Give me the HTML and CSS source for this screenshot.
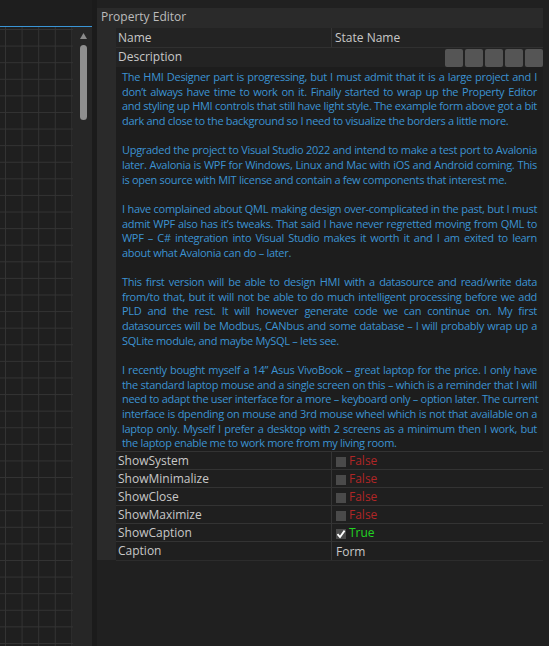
FILE: index.html
```html
<!DOCTYPE html>
<html>
<head>
<meta charset="utf-8">
<title>Property Editor</title>
<link rel="stylesheet" href="styles.css">
</head>
<body>
<div class="app">
  <div class="designer">
    <div class="designer-main">
      <div class="designer-top"></div>
      <div class="designer-body">
        <div class="canvas"></div>
        <div class="vscroll">
          <svg class="arrow" width="7" height="6" viewBox="0 0 7 6"><path d="M3.5 0 L7 6 L0 6 Z" fill="#8a8a8a"/></svg>
          <div class="thumb"></div>
        </div>
      </div>
    </div>
    <div class="strip"></div>
  </div>
  <div class="right">
    <div class="panel">
      <div class="panel-title">Property Editor</div>
      <div class="table">
        <div class="row head">
          <div class="key">Name</div>
          <div class="val">State Name</div>
        </div>
        <div class="row desc-head">
          <div class="key">Description</div>
          <div class="btns"><span class="btn"></span><span class="btn"></span><span class="btn"></span><span class="btn"></span><span class="btn"></span></div>
        </div>
        <div class="desc">
          <p>
            <span class="ln">The HMI Designer part is progressing, but I must admit that it is a large project and I</span>
            <span class="ln">don’t always have time to work on it. Finally started to wrap up the Property Editor</span>
            <span class="ln">and styling up HMI controls that still have light style. The example form above got a bit</span>
            <span class="ln last">dark and close to the background so I need to visualize the borders a little more.</span>
          </p>
          <p>
            <span class="ln">Upgraded the project to Visual Studio 2022 and intend to make a test port to Avalonia</span>
            <span class="ln">later. Avalonia is WPF for Windows, Linux and Mac with iOS and Android coming. This</span>
            <span class="ln last">is open source with MIT license and contain a few components that interest me.</span>
          </p>
          <p>
            <span class="ln">I have complained about QML making design over-complicated in the past, but I must</span>
            <span class="ln">admit WPF also has it’s tweaks. That said I have never regretted moving from QML to</span>
            <span class="ln">WPF – C# integration into Visual Studio makes it worth it and I am exited to learn</span>
            <span class="ln last">about what Avalonia can do – later.</span>
          </p>
          <p>
            <span class="ln">This first version will be able to design HMI with a datasource and read/write data</span>
            <span class="ln">from/to that, but it will not be able to do much intelligent processing before we add</span>
            <span class="ln">PLD and the rest. It will however generate code we can continue on. My first</span>
            <span class="ln">datasources will be Modbus, CANbus and some database – I will probably wrap up a</span>
            <span class="ln last">SQLite module, and maybe MySQL – lets see.</span>
          </p>
          <p>
            <span class="ln">I recently bought myself a 14” Asus VivoBook – great laptop for the price. I only have</span>
            <span class="ln">the standard laptop mouse and a single screen on this – which is a reminder that I will</span>
            <span class="ln">need to adapt the user interface for a more – keyboard only – option later. The current</span>
            <span class="ln">interface is dpending on mouse and 3rd mouse wheel which is not that available on a</span>
            <span class="ln">laptop only. Myself I prefer a desktop with 2 screens as a minimum then I work, but</span>
            <span class="ln last">the laptop enable me to work more from my living room.</span>
          </p>
        </div>
        <div class="row prop">
          <div class="key">ShowSystem</div>
          <div class="val"><span class="cb"></span><span class="false">False</span></div>
        </div>
        <div class="row prop">
          <div class="key">ShowMinimalize</div>
          <div class="val"><span class="cb"></span><span class="false">False</span></div>
        </div>
        <div class="row prop">
          <div class="key">ShowClose</div>
          <div class="val"><span class="cb"></span><span class="false">False</span></div>
        </div>
        <div class="row prop">
          <div class="key">ShowMaximize</div>
          <div class="val"><span class="cb"></span><span class="false">False</span></div>
        </div>
        <div class="row prop">
          <div class="key">ShowCaption</div>
          <div class="val"><span class="cb checked"><svg width="10" height="10" viewBox="0 0 10 10"><path d="M1.5 5.2 L4 8 L8.6 1.6" fill="none" stroke="#ffffff" stroke-width="1.8"/></svg></span><span class="true">True</span></div>
        </div>
        <div class="row prop lastrow">
          <div class="key">Caption</div>
          <div class="val">Form</div>
        </div>
      </div>
    </div>
  </div>
</div>
</body>
</html>
```

FILE: styles.css
```css
html, body {
  margin: 0;
  padding: 0;
}
body {
  background: #202020;
  font-family: "Open Sans", "Noto Sans", sans-serif;
  color: #c4c4c4;
  width: 549px;
  height: 646px;
  overflow: hidden;
}
.app {
  display: flex;
  height: 646px;
}
.designer {
  width: 97px;
  display: flex;
  flex-shrink: 0;
}
.designer-main {
  width: 92px;
  display: flex;
  flex-direction: column;
}
.designer-top {
  height: 26px;
  background: #1e1e1e;
  border-bottom: 1px solid #3a95d6;
}
.designer-body {
  flex: 1;
  display: flex;
}
.canvas {
  width: 73px;
  flex-shrink: 0;
  background-color: #1f1f1f;
  background-image:
    linear-gradient(to right, #333333 0, #333333 1px, rgba(0,0,0,0) 1px),
    linear-gradient(to bottom, #333333 0, #333333 1px, rgba(0,0,0,0) 1px);
  background-size: 16.6px 16.6px, 16.6px 16.6px;
  background-position: 5px 2px, 5px 2px;
  background-repeat: repeat, repeat;
}
.vscroll {
  width: 19px;
  flex-shrink: 0;
  background: #262626;
  display: flex;
  flex-direction: column;
  align-items: center;
  padding-top: 6px;
}
.arrow {
  display: block;
  margin-left: 1px;
}
.thumb {
  width: 7px;
  height: 75px;
  margin-top: 6px;
  margin-left: 1px;
  border-radius: 4px;
  background: #8f8f8f;
}
.strip {
  width: 5px;
  background: #1b1b1b;
}
.right {
  flex: 1;
  padding-top: 8px;
}
.panel {
  width: 446px;
  height: 552px;
  background: #2a2a2a;
}
.panel-title {
  height: 20px;
  line-height: 17px;
  padding-left: 4px;
  font-size: 12px;
  color: #bcbcbc;
}
.table {
  margin-left: 19px;
  background: #1f1f1f;
}
.row {
  display: flex;
  font-size: 12px;
  color: #c8c8c8;
}
.key {
  width: 213px;
  padding-left: 2px;
  flex-shrink: 0;
}
.val {
  flex: 1;
  padding-left: 4px;
  border-left: 1px solid #353535;
  display: flex;
  align-items: center;
}
.row.head {
  height: 19px;
  line-height: 19px;
  background: #232323;
}
.row.head .val {
  padding-left: 3px;
}
.row.desc-head {
  height: 19px;
  line-height: 18px;
  background: #232323;
  border-top: 1px solid #303030;
  justify-content: space-between;
}
.btns {
  display: flex;
  gap: 2px;
  padding-top: 1px;
}
.btn {
  width: 18px;
  height: 18px;
  border-radius: 2px;
  background: #555555;
}
.desc {
  background: #1d1d1d;
  padding: 3px 6px 0 6px;
  height: 381px;
  color: #3c93d2;
  font-size: 11px;
  letter-spacing: -0.3px;
  line-height: 14.65px;
}
.desc p {
  margin: 0 0 14.65px 0;
}
.ln {
  display: block;
  white-space: nowrap;
  text-align: justify;
  text-align-last: justify;
}
.ln.last {
  text-align-last: left;
}
.row.prop {
  height: 17px;
  line-height: 17px;
  border-top: 1px solid #333333;
}
.row.lastrow {
  height: 18px;
  border-bottom: 1px solid #2c2c2c;
}
.cb {
  width: 10px;
  height: 10px;
  background: #4a4a4a;
  margin-right: 3px;
  display: inline-block;
  position: relative;
  top: 1px;
}
.cb svg {
  display: block;
}
.false {
  color: #b02626;
}
.true {
  color: #22d322;
}
```
